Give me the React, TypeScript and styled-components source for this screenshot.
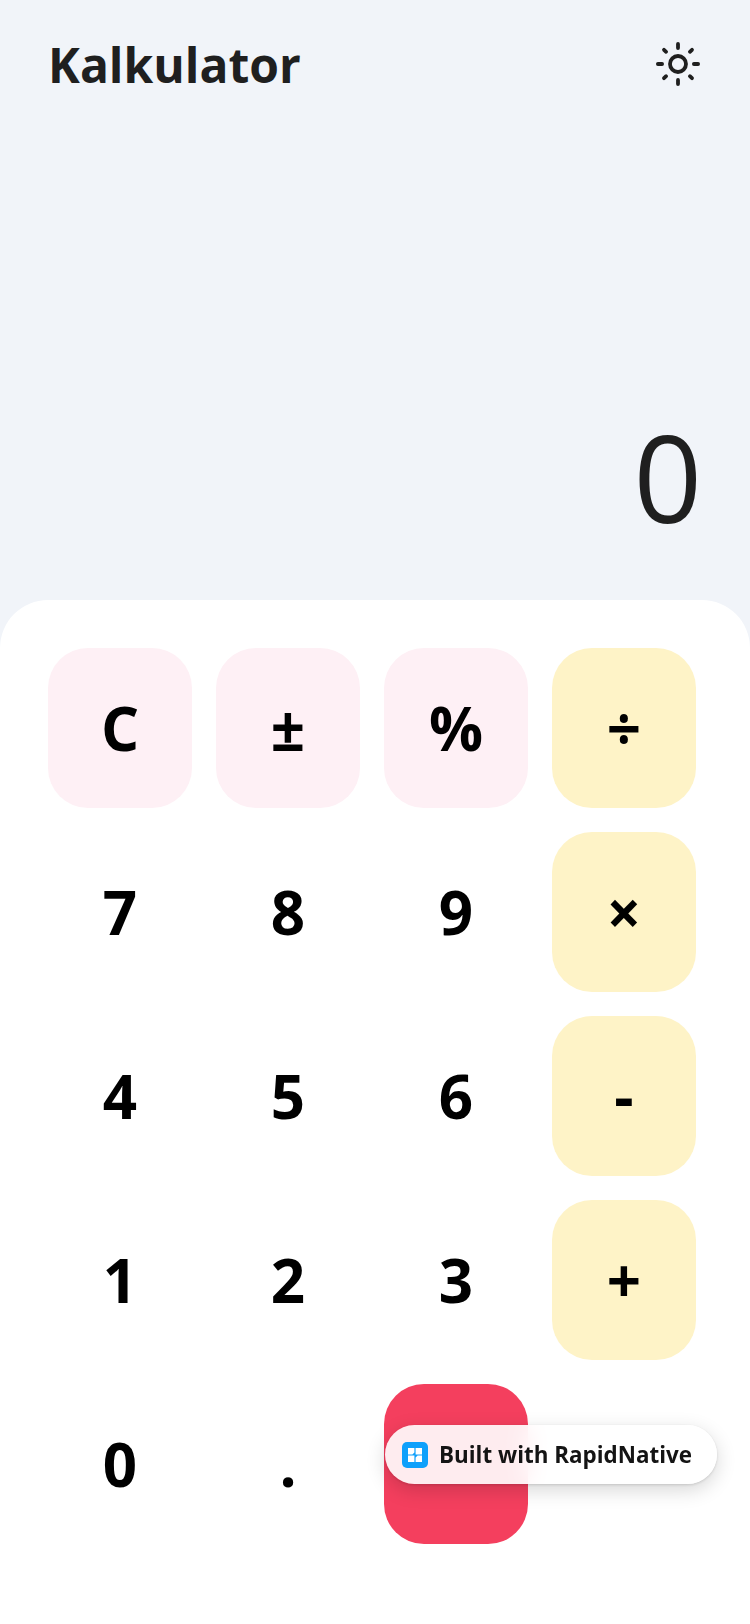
import styled, { createGlobalStyle } from 'styled-components';

type KeyKind = 'digit' | 'action' | 'operator' | 'equals';

interface KeyDef {
  label: string;
  kind: KeyKind;
}

const keys: KeyDef[] = [
  { label: 'C', kind: 'action' },
  { label: '±', kind: 'action' },
  { label: '%', kind: 'action' },
  { label: '÷', kind: 'operator' },
  { label: '7', kind: 'digit' },
  { label: '8', kind: 'digit' },
  { label: '9', kind: 'digit' },
  { label: '×', kind: 'operator' },
  { label: '4', kind: 'digit' },
  { label: '5', kind: 'digit' },
  { label: '6', kind: 'digit' },
  { label: '-', kind: 'operator' },
  { label: '1', kind: 'digit' },
  { label: '2', kind: 'digit' },
  { label: '3', kind: 'digit' },
  { label: '+', kind: 'operator' },
  { label: '0', kind: 'digit' },
  { label: '.', kind: 'digit' },
  { label: '=', kind: 'equals' },
];

const keyColors: Record<KeyKind, string> = {
  digit: 'transparent',
  action: '#fef0f5',
  operator: '#fef3c7',
  equals: '#f43f5e',
};

const SunIcon = () => (
  <svg width="48" height="48" viewBox="0 1 48 48" fill="none" stroke="#1f1f1f" strokeWidth="3.8" strokeLinecap="round">
    <circle cx="24" cy="24" r="8" />
    <path d="M24 3.9v4.2M24 39.9v4.2M3.9 24h4.2M39.9 24h4.2M10 9.8l2.1 2M35.9 36.2l2.1 2M38 9.8l-2.1 2M12.1 36.2l-2.1 2" />
  </svg>
);

const RapidLogo = () => (
  <svg width="26" height="26" viewBox="0 0 26 26">
    <rect width="26" height="26" rx="5" fill="#0ea0fb" />
    <path d="M6 6h6.4v4.4l-2 2H6zM13.6 6H20v6.4h-6.4zM6 13.6h6.4V20H6zM15.6 13.6H20V20h-6.4v-4.4z" fill="#ffffff" />
  </svg>
);

export default function App() {
  return (
    <>
      <GlobalStyle />
      <Screen>
        <Header>
          <Title>Kalkulator</Title>
          <ThemeToggle aria-label="Toggle theme">
            <SunIcon />
          </ThemeToggle>
        </Header>

        <Display>
          <DisplayValue>0</DisplayValue>
        </Display>

        <Keypad>
          {keys.map((key) => (
            <Key key={key.label} kind={key.kind} aria-label={key.label}>
              {/* the equals sign sits under the badge, so it is never seen */}
              {key.kind === 'equals' ? null : key.label}
            </Key>
          ))}
        </Keypad>

        <Badge>
          <RapidLogo />
          <BadgeText>Built with RapidNative</BadgeText>
        </Badge>
      </Screen>
    </>
  );
}

const GlobalStyle = createGlobalStyle`
  html, body {
    margin: 0;
    padding: 0;
    background: #ffffff;
  }
  * {
    box-sizing: border-box;
  }
`;

const Screen = styled.div`
  position: relative;
  width: 750px;
  height: 1624px;
  display: flex;
  flex-direction: column;
  overflow: hidden;
  background-color: #f1f4f9;
  font-family: 'Open Sans', 'Noto Sans', sans-serif;
`;

const Header = styled.header`
  display: flex;
  align-items: center;
  justify-content: space-between;
  padding: 33px 48px 0 48px;
`;

const Title = styled.h1`
  margin: 0;
  font-size: 48px;
  line-height: 64px;
  font-weight: 700;
  color: #1f1f1f;
`;

const ThemeToggle = styled.button`
  display: flex;
  padding: 0;
  border: 0;
  background: none;
`;

const Display = styled.div`
  flex: 1;
  display: flex;
  align-items: flex-end;
  justify-content: flex-end;
  padding: 0 48px 63px 0;
`;

const DisplayValue = styled.div`
  font-size: 120px;
  line-height: 120px;
  font-weight: 400;
  color: #1f1f1f;
`;

const Keypad = styled.div`
  display: grid;
  grid-template-columns: repeat(4, 144px);
  grid-auto-rows: 160px;
  gap: 24px;
  height: 1024px;
  padding: 48px 48px 0;
  background-color: #ffffff;
  border-radius: 48px 48px 0 0;
`;

const Key = styled.button<{ kind: KeyKind }>`
  display: flex;
  align-items: center;
  justify-content: center;
  padding: 0;
  border: 0;
  border-radius: 40px;
  background-color: ${(props) => keyColors[props.kind]};
  color: #000000;
  font-family: inherit;
  font-size: 60px;
  font-weight: 700;
`;

const Badge = styled.div`
  position: absolute;
  left: 385px;
  top: 1425px;
  width: 332px;
  height: 59px;
  display: flex;
  align-items: center;
  gap: 11px;
  padding-left: 17px;
  border-radius: 30px;
  background-color: rgba(255, 255, 255, 0.9);
  backdrop-filter: blur(12px);
  box-shadow: 0 6px 20px rgba(0, 0, 0, 0.16), 0 1px 3px rgba(0, 0, 0, 0.14);
`;

const BadgeText = styled.span`
  font-size: 22.4px;
  font-weight: 700;
  color: #141414;
  white-space: nowrap;
`;
